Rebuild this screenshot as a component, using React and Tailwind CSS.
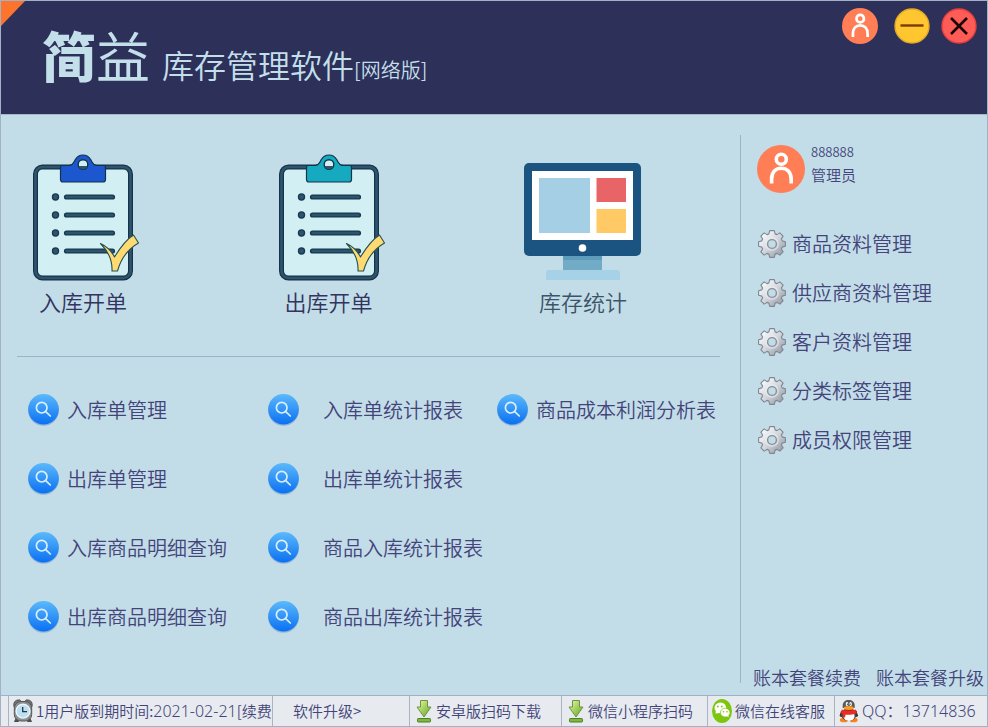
import React from "react";

const REPORTS = [
	["入库单管理", "出库单管理", "入库商品明细查询", "出库商品明细查询"],
	["入库单统计报表", "出库单统计报表", "商品入库统计报表", "商品出库统计报表"],
	["商品成本利润分析表"],
];

const REPORT_GAPS = ["gap-[7px]", "gap-[23px]", "gap-[7px]"];

const SETTINGS = [
	"商品资料管理",
	"供应商资料管理",
	"客户资料管理",
	"分类标签管理",
	"成员权限管理",
];

// Outline of the eight-toothed gear, centred on 0,0
const gearPath = () => {
	const points = [];
	for (let i = 0; i < 8; i++) {
		const a = (i * Math.PI) / 4;
		[
			[-0.3, 10.6],
			[-0.17, 13.6],
			[0.17, 13.6],
			[0.3, 10.6],
		].forEach(([d, r]) => {
			points.push(
				`${(r * Math.sin(a + d)).toFixed(2)},${(-r * Math.cos(a + d)).toFixed(2)}`
			);
		});
	}
	return `M${points.join("L")}Z`;
};

const GEAR = gearPath();

const GearIcon = () => (
	<svg viewBox="-15 -15 30 30" className="size-[30px] shrink-0" aria-hidden="true">
		<defs>
			<linearGradient id="gear" x1="0" y1="0" x2="1" y2="1">
				<stop offset="0.15" stopColor="#f6f8fa" />
				<stop offset="0.5" stopColor="#d3d7dd" />
				<stop offset="0.95" stopColor="#8e939d" />
			</linearGradient>
		</defs>
		<path d={GEAR} fill="url(#gear)" stroke="#808792" strokeWidth="1.1" strokeLinejoin="round" />
		<circle r="6.2" fill="none" stroke="#eceff3" strokeWidth="1.2" opacity="0.7" />
		<circle r="4.4" fill="#c2dde8" stroke="#8b919b" strokeWidth="1.4" />
	</svg>
);

const PersonIcon = ({ className }) => (
	<svg viewBox="0 0 48 48" className={className} aria-hidden="true">
		<circle cx="24" cy="24" r="24" fill="#ff7e55" />
		<g fill="none" stroke="#fff" strokeWidth="3.6">
			<circle cx="24.3" cy="14.2" r="5" />
			<path d="M14.6 38.6V34.5C14.6 27 18.8 23.2 24.3 23.2S34.2 27 34.2 34.5V38.6" />
		</g>
	</svg>
);

const MinimizeIcon = () => (
	<svg viewBox="0 0 36 36" className="size-9" aria-hidden="true">
		<circle cx="18" cy="18" r="17" fill="#ffc62f" stroke="#e3a92b" strokeWidth="1.4" />
		<path d="M6.5 17.5h23" stroke="#7c3b06" strokeWidth="2.4" />
	</svg>
);

const CloseIcon = () => (
	<svg viewBox="0 0 36 36" className="size-9" aria-hidden="true">
		<circle cx="18" cy="18" r="17" fill="#ff5c57" stroke="#e93f3c" strokeWidth="1.4" />
		<path d="M10 10l16 16M26 10L10 26" stroke="#180505" strokeWidth="2.6" />
	</svg>
);

const ClipboardIcon = ({ clip }) => (
	<svg viewBox="0 0 108 128" className="w-[108px] h-32 shrink-0" aria-hidden="true">
		<rect x="2.5" y="13" width="95" height="111" rx="7" fill="#d2eff3" stroke="#17324a" strokeWidth="5" />
		<rect x="2.5" y="13" width="95" height="111" rx="7" fill="none" stroke="#2d566d" strokeWidth="2.6" />
		<path
			d="M29.5 11.5H36C40 11 41 8 42 6C44 2.5 46.5 1 50 1S56 2.5 58 6C59 8 60 11 64 11.5H70.5Q72.5 11.5 72.5 13.5V25.5Q72.500 28 70 28H30Q27.5 28 27.5 25.5V13.5Q27.5 11.5 29.5 11.5Z"
			fill={clip}
			stroke="#12344a"
			strokeWidth="1.2"
		/>
		<circle cx="50" cy="10.5" r="4.8" fill="#d2eff3" stroke="#12344a" strokeWidth="1.4" />
		<path d="M45.5 12a4.8 4.8 0 0 0 9 0Z" fill="#2d566d" />
		{[43, 61, 79, 97].map((y) => (
			<g key={y}>
				<circle cx="22.5" cy={y} r="3.7" fill="#17384f" />
				<circle cx="22.5" cy={y} r="2.4" fill="#2d566d" />
				<path d={`M33.5 ${y}H79.5`} stroke="#17384f" strokeWidth="5.2" strokeLinecap="round" />
				<path d={`M33.5 ${y}H79.5`} stroke="#2d566d" strokeWidth="2.4" strokeLinecap="round" />
			</g>
		))}
		<path
			d="M67.5 89.5C73 92 78.5 97 81.5 103C87 94 92.5 86 100.5 81L105.5 89C95 95 87.5 106 84.5 117H79C79.5 107 76 98 67.5 89.5Z"
			fill="#ffda72"
			stroke="#24514f"
			strokeWidth="1.1"
			strokeLinejoin="round"
		/>
	</svg>
);

const MonitorIcon = () => (
	<svg viewBox="0 0 118 118" className="size-[118px]" aria-hidden="true">
		<path d="M39 92h39v16H39z" fill="#72abc6" />
		<path d="M39 92h39v5H39z" fill="#5d9cba" />
		<path d="M25 107H93a3 3 0 0 1 3 3v7H22v-7a3 3 0 0 1 3-3z" fill="#a6d1e7" />
		<rect width="117" height="93" rx="5" fill="#1b5480" />
		<path d="M8 8h101v69H8z" fill="#fff" />
		<path d="M15 15h51v55H15z" fill="#a5cfe5" />
		<path d="M72.5 15H102v24H72.5z" fill="#e96467" />
		<path d="M72.5 46H102v24H72.5z" fill="#ffc965" />
		<circle cx="58.5" cy="85" r="3.8" fill="#fff" />
	</svg>
);

const SearchBadge = () => (
	<svg viewBox="0 0 32 34" className="w-8 h-[34px] shrink-0" aria-hidden="true">
		<defs>
			<linearGradient id="badge" x1="0" y1="0" x2="0" y2="1">
				<stop offset="0" stopColor="#5cb9fb" />
				<stop offset="1" stopColor="#0a70f2" />
			</linearGradient>
		</defs>
		<circle cx="15.5" cy="17.3" r="15.5" fill="#5d88b5" opacity="0.45" />
		<circle cx="15.5" cy="16.3" r="15.3" fill="url(#badge)" />
		<g fill="none" stroke="#d9efff" strokeWidth="1.7" strokeLinecap="round">
			<circle cx="13.7" cy="14.7" r="5.3" />
			<path d="M17.7 18.7l4.6 4.3" />
		</g>
	</svg>
);

const ClockIcon = () => (
	<svg viewBox="0 0 20 24" className="w-5 h-6 shrink-0" aria-hidden="true">
		<path d="M4 18l-2.500 4.500h4zM16 18l2.500 4.500h-4z" fill="#4c4c4c" stroke="#4c4c4c" />
		<path d="M1 8Q-.5 1 6.500 .8L9 3zM19 8Q20.500 1 13.500 .8L11 3z" fill="#777" stroke="#454545" strokeWidth="0.8" />
		<rect x="1.3" y="2.5" width="17.4" height="19.5" rx="6.5" fill="#8c8f91" stroke="#555" />
		<circle cx="10" cy="12.2" r="6.9" fill="#b9e0f5" stroke="#eef6fa" strokeWidth="1.4" />
		<path d="M9.7 8v4.7H14" fill="none" stroke="#333" strokeWidth="1.3" />
	</svg>
);

const DownloadIcon = () => (
	<svg viewBox="0 0 16 24" className="w-4 h-6 shrink-0" aria-hidden="true">
		<defs>
			<linearGradient id="download" x1="0" y1="0" x2="1" y2="1">
				<stop offset="0.1" stopColor="#dcf29a" />
				<stop offset="1" stopColor="#5ca31c" />
			</linearGradient>
		</defs>
		<path
			d="M4.5 1.5h7V8H15L8 18L1 8h3.5z"
			fill="url(#download)"
			stroke="#6f9440"
			strokeLinejoin="round"
		/>
		<rect x="1.5" y="19.5" width="13" height="3.5" rx="0.8" fill="#7fb840" stroke="#4f7f22" />
	</svg>
);

const WechatIcon = () => (
	<svg viewBox="0 0 20 24" className="w-5 h-6 shrink-0" aria-hidden="true">
		<ellipse cx="10" cy="12" rx="10" ry="12" fill="#7cc70d" />
		<path d="M3.5 14.5l.3-2.5A5.8 5.3 0 1 1 8 14l-2 .2z" fill="#fff" />
		<path
			d="M17 18.5l-.2-2A4.8 4.4 0 1 0 13.5 18l1.5-.3z"
			fill="#fff"
			stroke="#7cc70d"
			strokeWidth="0.7"
		/>
		<g fill="#7cc70d">
			<circle cx="5.8" cy="7.5" r="0.9" />
			<circle cx="9.8" cy="7.5" r="0.9" />
			<circle cx="11.5" cy="12.7" r="0.8" />
			<circle cx="15" cy="12.7" r="0.8" />
		</g>
	</svg>
);

const PenguinIcon = () => (
	<svg viewBox="0 0 20 24" className="w-5 h-6 shrink-0" aria-hidden="true">
		<ellipse cx="5" cy="21" rx="4.2" ry="2.3" fill="#f98219" />
		<ellipse cx="14.5" cy="21" rx="4.2" ry="2.3" fill="#f98219" />
		<path d="M2.5 12L1 17l2 .5zM17 12l1.7 5-2 .5z" fill="#333" stroke="#333" />
		<ellipse cx="9.8" cy="15.5" rx="7.7" ry="6.5" fill="#444" />
		<ellipse cx="10" cy="17" rx="5.6" ry="5" fill="#fff" />
		<path d="M3.7 9V6.5C3.7 3 6.3 1 9.7 1s6 2 6 5.5V9z" fill="#55595c" />
		<ellipse cx="8" cy="5" rx="1.3" ry="1.9" fill="#fff" />
		<ellipse cx="11.6" cy="5" rx="1.3" ry="1.9" fill="#fff" />
		<circle cx="8.4" cy="5.2" r="0.6" fill="#222" />
		<circle cx="11.2" cy="5.2" r="0.6" fill="#222" />
		<path d="M2.7 10.5C6 12 13.5 12 17 10.5l.8 3.500C14 16 9 16 6.500 15.700L6 18.5l-2.5-.5.3-3-1.8-1z" fill="#ed2b22" />
		<ellipse cx="9.8" cy="9" rx="5" ry="1.9" fill="#ff9b21" />
	</svg>
);

const ShortcutCard = ({ label, className, children }) => (
	<a href="#" className={`flex flex-col items-center text-[22px] leading-8 ${className}`}>
		<span className="flex h-[131px] items-start self-start">{children}</span>
		<span className="whitespace-nowrap">{label}</span>
	</a>
);

const Header = () => (
	<header className="flex min-h-[114px] items-start justify-between border-b border-[#a9b8c6] bg-[#2d3058] text-[#c2dfea]">
		<div className="flex">
			<svg viewBox="0 0 25 25" className="size-[25px]" aria-hidden="true">
				<path d="M0 0h24L0 25z" fill="#ff742d" />
			</svg>
			<h1 className="flex items-baseline pt-4 pl-4 whitespace-nowrap">
				<span className="pr-3 text-[54px] leading-[76px]">
					<span className="font-black">简</span>
					<span className="font-normal">益</span>
				</span>
				<span className="text-[32px]">库存管理软件</span>
				<span className="text-xl">[网络版]</span>
			</h1>
		</div>
		<div className="flex gap-4 pt-[7px] pr-[10px]">
			<button type="button" aria-label="用户">
				<PersonIcon className="size-9" />
			</button>
			<div className="flex gap-[11px]">
				<button type="button" aria-label="最小化">
					<MinimizeIcon />
				</button>
				<button type="button" aria-label="关闭">
					<CloseIcon />
				</button>
			</div>
		</div>
	</header>
);

const Sidebar = () => (
	<aside className="flex w-[247px] shrink-0 flex-col pt-5 pb-3">
		<div className="flex grow flex-col border-l border-[#9fb0c8] pl-4">
			<div className="flex gap-[6px] pt-[10px]">
				<PersonIcon className="size-12" />
				<div className="text-[15px] leading-6">
					<p className="text-[13px] leading-[14px]">888888</p>
					<p className="pt-1">管理员</p>
				</div>
			</div>
			<nav className="flex flex-col pt-[26px] text-xl">
				{SETTINGS.map((label) => (
					<a key={label} href="#" className="flex h-[49px] items-center gap-[5px]">
						<GearIcon />
						<span>{label}</span>
					</a>
				))}
			</nav>
			<div className="-ml-1 mt-auto flex justify-between pr-[3px] text-lg leading-3 whitespace-nowrap">
				<a href="#">账本套餐续费</a>
				<a href="#">账本套餐升级</a>
			</div>
		</div>
	</aside>
);

const StatusBar = () => (
	<footer className="flex h-[31px] items-stretch border-t border-[#9fb0c8] bg-[#e7ebef] text-[15px] whitespace-nowrap [&>*]:flex [&>*]:items-center [&>*]:border-l [&>*]:border-[#a9b3c2]">
		<a href="#" className="ml-[7px] w-[264px] gap-[3px] pl-1">
			<ClockIcon />
			<span>
				1用户版到期时间:<span className="font-['Noto_Sans'] text-base">2021-02-21</span>[续费
			</span>
		</a>
		<a href="#" className="w-[137px] pl-5">
			软件升级&gt;
		</a>
		<a href="#" className="w-[152px] gap-1 pl-[6px]">
			<DownloadIcon />
			安卓版扫码下载
		</a>
		<a href="#" className="w-[146px] gap-1 pl-[6px]">
			<DownloadIcon />
			微信小程序扫码
		</a>
		<a href="#" className="w-[127px] gap-[3px] pl-1">
			<WechatIcon />
			微信在线客服
		</a>
		<a href="#" className="grow gap-[3px] pl-1">
			<PenguinIcon />
			<span className="font-['Noto_Sans','Noto_Sans_CJK_SC',sans-serif] text-base">QQ：13714836</span>
		</a>
	</footer>
);

const App = () => {
	return (
		<div
			lang="zh-CN"
			className="flex min-h-screen flex-col border border-[#a3b1c4] bg-[#c2dde8] font-['Noto_Sans_CJK_SC',sans-serif] font-[350] text-[#44447a]"
		>
			<Header />
			<div className="flex grow">
				<main className="grow">
					<div className="grid grid-cols-[1fr_1fr_216px] pt-[39px] pl-8 text-[#33335f]">
						<ShortcutCard label="入库开单" className="w-[100px]">
							<ClipboardIcon clip="#1d57cf" />
						</ShortcutCard>
						<ShortcutCard label="出库开单" className="w-[100px]">
							<ClipboardIcon clip="#15aabf" />
						</ShortcutCard>
						<ShortcutCard label="库存统计" className="w-[118px] text-[#3d5468]">
							<span className="pt-[9px]">
								<MonitorIcon />
							</span>
						</ShortcutCard>
					</div>
					<hr className="mt-[39px] mr-5 ml-4 border-[#9fb0c8]" />
					<div className="grid grid-cols-[240px_1fr_243px] pt-[18px] pl-[27px] text-xl">
						{REPORTS.map((column, i) => (
							<nav key={i} className="flex flex-col">
								{column.map((label) => (
									<a
										key={label}
										href="#"
										className={`flex h-[69px] items-center whitespace-nowrap ${REPORT_GAPS[i]}`}
									>
										<SearchBadge />
										<span>{label}</span>
									</a>
								))}
							</nav>
						))}
					</div>
				</main>
				<Sidebar />
			</div>
			<StatusBar />
		</div>
	);
};

export default App;
